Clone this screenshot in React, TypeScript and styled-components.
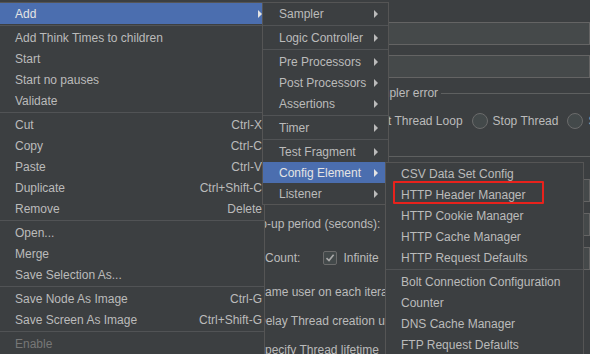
import React from "react";
import styled, { createGlobalStyle } from "styled-components";

type Entry =
  | { sep: true }
  | {
      sep?: false;
      label: string;
      shortcut?: string;
      sub?: boolean;
      active?: boolean;
      disabled?: boolean;
    };

const mainMenu: Entry[] = [
  { label: "Add", sub: true, active: true },
  { sep: true },
  { label: "Add Think Times to children" },
  { label: "Start" },
  { label: "Start no pauses" },
  { label: "Validate" },
  { sep: true },
  { label: "Cut", shortcut: "Ctrl-X" },
  { label: "Copy", shortcut: "Ctrl-C" },
  { label: "Paste", shortcut: "Ctrl-V" },
  { label: "Duplicate", shortcut: "Ctrl+Shift-C" },
  { label: "Remove", shortcut: "Delete" },
  { sep: true },
  { label: "Open..." },
  { label: "Merge" },
  { label: "Save Selection As..." },
  { sep: true },
  { label: "Save Node As Image", shortcut: "Ctrl-G" },
  { label: "Save Screen As Image", shortcut: "Ctrl+Shift-G" },
  { sep: true },
  { label: "Enable", disabled: true },
];

const addMenu: Entry[] = [
  { label: "Sampler", sub: true },
  { sep: true },
  { label: "Logic Controller", sub: true },
  { sep: true },
  { label: "Pre Processors", sub: true },
  { label: "Post Processors", sub: true },
  { label: "Assertions", sub: true },
  { sep: true },
  { label: "Timer", sub: true },
  { sep: true },
  { label: "Test Fragment", sub: true },
  { label: "Config Element", sub: true, active: true },
  { label: "Listener", sub: true },
];

const configMenu: Entry[] = [
  { label: "CSV Data Set Config" },
  { label: "HTTP Header Manager" },
  { label: "HTTP Cookie Manager" },
  { label: "HTTP Cache Manager" },
  { label: "HTTP Request Defaults" },
  { sep: true },
  { label: "Bolt Connection Configuration" },
  { label: "Counter" },
  { label: "DNS Cache Manager" },
  { label: "FTP Request Defaults" },
];

const GlobalStyle = createGlobalStyle`
  html, body {
    margin: 0;
    padding: 0;
    background: #3c3f41;
  }
  body {
    font-family: "Liberation Sans", Arial, sans-serif;
    font-size: 12px;
    color: #bbbbbb;
  }
`;

const Screen = styled.div`
  position: relative;
  width: 590px;
  height: 354px;
  overflow: hidden;
  background: #3c3f41;
`;

/* ---------- the thread group form behind the popup ---------- */

const Form = styled.div`
  display: flex;
  flex-direction: column;
  padding-top: 22px;
`;

const Field = styled.div<{ $indent?: number }>`
  height: 21px;
  margin-left: ${(p) => p.$indent ?? 240}px;
  border: 1px solid #646464;
  background: #45494a;
  & + & {
    margin-top: 10px;
  }
`;

const Legend = styled.div<{ $top: number }>`
  display: flex;
  align-items: center;
  gap: 3px;
  height: 28px;
  margin-top: ${(p) => p.$top}px;
  margin-left: 228px;
  white-space: nowrap;

  &::after {
    content: "";
    flex: 1;
    height: 1px;
    background: #5e6060;
  }
`;

const RadioRow = styled.div`
  display: flex;
  align-items: center;
  gap: 9px;
  height: 28px;
  margin-left: 239px;
  white-space: nowrap;
`;

const Option = styled.label`
  display: flex;
  align-items: center;
  gap: 5px;
`;

const Radio = styled.span`
  width: 14px;
  height: 14px;
  flex: none;
  border-radius: 50%;
  border: 1px solid #6b6b6b;
  background: #43494a;
`;

const Row = styled.div<{ $h: number }>`
  display: flex;
  align-items: center;
  gap: 8px;
  height: ${(p) => p.$h}px;
  margin-left: 235px;
  white-space: nowrap;
`;

const RowField = styled.div`
  flex: 1;
  height: 21px;
  border: 1px solid #646464;
  background: #45494a;
`;

const Box = styled.span`
  display: inline-flex;
  align-items: center;
  justify-content: center;
  width: 12px;
  height: 12px;
  flex: none;
  border: 1px solid #6b6b6b;
  border-radius: 2px;
  background: #43494a;
`;

const Check = ({ on }: { on?: boolean }) => (
  <Box>
    {on && (
      <svg width="10" height="10" viewBox="0 0 10 10">
        <path d="M1.5 5.2 L4 7.6 L8.6 1.8" fill="none" stroke="#a9a9a9" strokeWidth="1.6" />
      </svg>
    )}
  </Box>
);

const Infinite = styled.span`
  display: flex;
  align-items: center;
  gap: 6px;
  margin-left: 15px;
`;

/* ---------- popup menus ---------- */

const Menu = styled.div<{ $x: number; $y: number; $w: number }>`
  position: absolute;
  left: ${(p) => p.$x}px;
  top: ${(p) => p.$y}px;
  width: ${(p) => p.$w}px;
  box-sizing: border-box;
  border: 1px solid #555555;
  background: #3c3f41;
  display: flex;
  flex-direction: column;
`;

const Item = styled.div<{ $active?: boolean; $disabled?: boolean; $pl: number; $pr: number }>`
  display: flex;
  align-items: center;
  height: 21px;
  padding: 0 ${(p) => p.$pr}px 0 ${(p) => p.$pl}px;
  white-space: nowrap;
  background: ${(p) => (p.$active ? "#4b6eaf" : "transparent")};
  color: ${(p) => (p.$disabled ? "#777777" : p.$active ? "#e4e4e4" : "#bbbbbb")};
`;

const Label = styled.span`
  flex: 1;
`;

const Shortcut = styled.span`
  margin-left: 12px;
`;

const Arrow = styled.span<{ $active?: boolean }>`
  width: 0;
  height: 0;
  border-top: 4px solid transparent;
  border-bottom: 4px solid transparent;
  border-left: 4px solid ${(p) => (p.$active ? "#e4e4e4" : "#bbbbbb")};
`;

const Separator = styled.div`
  height: 1px;
  margin: 1px 0;
  background: #515355;
`;

const Highlight = styled.div`
  position: absolute;
  left: 393px;
  top: 181px;
  width: 151px;
  height: 23px;
  box-sizing: border-box;
  border: 2px solid #e8221c;
  border-radius: 1px;
`;

const PopupMenu = ({
  items,
  x,
  y,
  w,
  pl,
  pr,
}: {
  items: Entry[];
  x: number;
  y: number;
  w: number;
  pl: number;
  pr: number;
}) => (
  <Menu $x={x} $y={y} $w={w}>
    {items.map((it, i) =>
      it.sep ? (
        <Separator key={i} />
      ) : (
        <Item key={i} $active={it.active} $disabled={it.disabled} $pl={pl} $pr={pr}>
          <Label>{it.label}</Label>
          {it.shortcut && <Shortcut>{it.shortcut}</Shortcut>}
          {it.sub && <Arrow $active={it.active} />}
        </Item>
      )
    )}
  </Menu>
);

const App = () => {
  return (
    <Screen>
      <GlobalStyle />
      <Form>
        <Field />
        <Field />
        <Legend $top={1}>Action to be taken after a Sampler error</Legend>
        <RadioRow>
          <Option>
            <Radio />
            Continue
          </Option>
          <Option>
            <Radio />
            Start Next Thread Loop
          </Option>
          <Option>
            <Radio />
            Stop Thread
          </Option>
          <Option>
            <Radio />
            Stop Test
          </Option>
          <Option>
            <Radio />
            Stop Test Now
          </Option>
        </RadioRow>
        <Legend $top={7}>Thread Properties</Legend>
        <Row $h={34} style={{ marginTop: 3 }}>
          Number of Threads (users):
          <RowField />
        </Row>
        <Row $h={34}>
          Ramp-up period (seconds):
          <RowField />
        </Row>
        <Row $h={34}>
          Loop Count:
          <Infinite>
            <Check on />
            Infinite
          </Infinite>
          <RowField />
        </Row>
        <Row $h={33}>
          <Check on />
          Same user on each iteration
        </Row>
        <Row $h={26}>
          <Check />
          Delay Thread creation until needed
        </Row>
        <Row $h={32}>
          <Check />
          Specify Thread lifetime
        </Row>
      </Form>

      <PopupMenu items={mainMenu} x={-1} y={2} w={266} pl={15} pr={2} />
      <PopupMenu items={addMenu} x={262} y={2} w={127} pl={16} pr={10} />
      <PopupMenu items={configMenu} x={385} y={162} w={199} pl={15} pr={10} />
      <Highlight />
    </Screen>
  );
};

export default App;
